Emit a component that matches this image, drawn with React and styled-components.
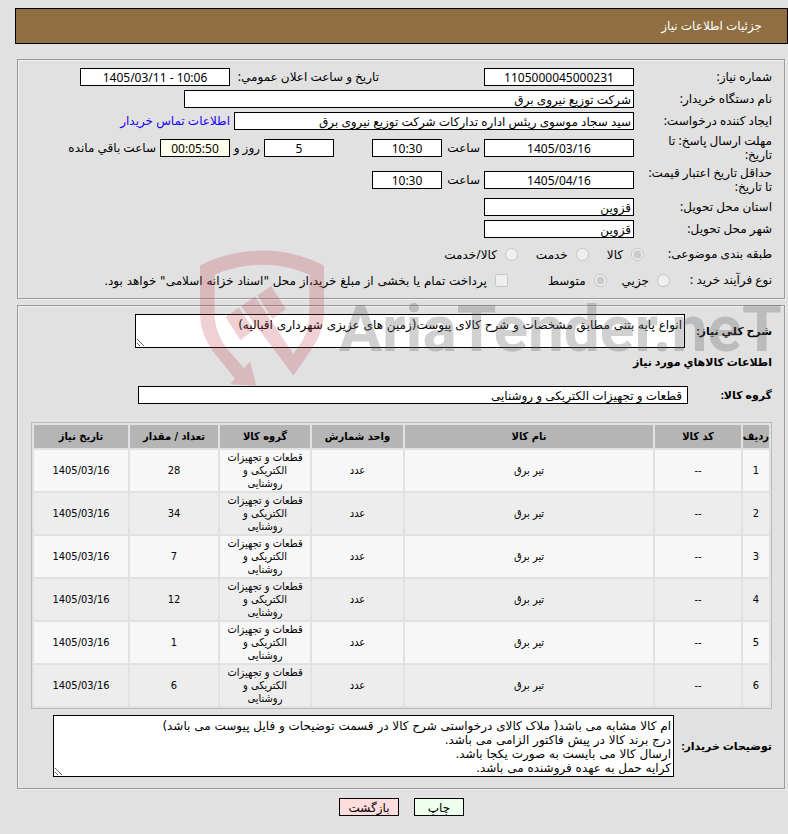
import styled, { createGlobalStyle } from 'styled-components';

const rows = [
    { id: 1, qty: 28 },
    { id: 2, qty: 34 },
    { id: 3, qty: 7 },
    { id: 4, qty: 12 },
    { id: 5, qty: 1 },
    { id: 6, qty: 6 },
];

const buyerNotes = `ام کالا مشابه می باشد( ملاک کالای درخواستی شرح کالا در قسمت توضیحات و فایل پیوست می باشد)
درج برند کالا در پیش فاکتور الزامی می باشد.
ارسال کالا می بایست به صورت یکجا باشد.
کرایه حمل به عهده فروشنده می باشد.`;

function Option ({ type, name, checked, gap, wide, children }) {

    return (
        <OptionLabel $gap={gap} $wide={wide}>
            <input type={type} name={name} defaultChecked={checked} disabled />
            <span>{children}</span>
        </OptionLabel>
    );

}

function NeedInfo () {

    return (

        <Panel>
            <Row>
                <Label htmlFor="number">شماره نیاز:</Label>
                <Field id="number" dir="ltr" $width={150} $center readOnly value="1105000045000231" />
                <SideLabel htmlFor="announce">تاریخ و ساعت اعلان عمومي:</SideLabel>
                <Field id="announce" dir="ltr" $width={150} $center readOnly value="1405/03/11 - 10:06" />
            </Row>
            <Row>
                <Label htmlFor="buyer">نام دستگاه خریدار:</Label>
                <Field id="buyer" $width={450} readOnly value="شرکت توزیع نیروی برق" />
            </Row>
            <Row>
                <Label htmlFor="creator">ایجاد کننده درخواست:</Label>
                <Field id="creator" $width={400} readOnly value="سید سجاد موسوی ریئس اداره تدارکات شرکت توزیع نیروی برق" />
                <ContactLink href="#contact">اطلاعات تماس خریدار</ContactLink>
            </Row>
            <Row $height={32}>
                <Label htmlFor="deadline">مهلت ارسال پاسخ: تا<br />تاریخ:</Label>
                <Field id="deadline" dir="ltr" $width={150} $center readOnly value="1405/03/16" />
                <Unit htmlFor="deadlineTime" $width={42}>ساعت</Unit>
                <Field id="deadlineTime" dir="ltr" $width={70} $center readOnly value="10:30" />
                <Remaining>
                    <Field id="days" dir="ltr" $width={70} $center readOnly value="5" />
                    <Unit htmlFor="days" $width={34}>روز و</Unit>
                    <Field id="left" dir="ltr" $width={70} $center $color="#ffffee" readOnly value="00:05:50" />
                    <Unit htmlFor="left">ساعت باقي مانده</Unit>
                </Remaining>
            </Row>
            <Row $height={32}>
                <Label htmlFor="valid">حداقل تاریخ اعتبار قیمت:<br />تا تاریخ:</Label>
                <Field id="valid" dir="ltr" $width={150} $center readOnly value="1405/04/16" />
                <Unit htmlFor="validTime" $width={42}>ساعت</Unit>
                <Field id="validTime" dir="ltr" $width={70} $center readOnly value="10:30" />
            </Row>
            <Row>
                <Label htmlFor="province">استان محل تحویل:</Label>
                <Field id="province" $width={150} readOnly value="قزوین" />
            </Row>
            <Row>
                <Label htmlFor="city">شهر محل تحویل:</Label>
                <Field id="city" $width={150} readOnly value="قزوین" />
            </Row>
            <Row $height={28}>
                <Label as="span" $width={128}>طبقه بندی موضوعی:</Label>
                <Option type="radio" name="kind" checked gap={18}>کالا</Option>
                <Option type="radio" name="kind" gap={18}>خدمت</Option>
                <Option type="radio" name="kind">کالا/خدمت</Option>
            </Row>
            <Row $height={24}>
                <Label as="span" $width={102}>نوع فرآیند خرید :</Label>
                <Option type="radio" name="process" gap={15}>جزیي</Option>
                <Option type="radio" name="process" checked gap={40}>متوسط</Option>
                <Option type="checkbox" name="treasury" wide>پرداخت تمام یا بخشی از مبلغ خرید،از محل "اسناد خزانه اسلامی" خواهد بود.</Option>
            </Row>
        </Panel>

    );

}

function GoodsInfo () {

    return (

        <GoodsPanel>
            <Row>
                <BoldLabel htmlFor="summary" $width={87}>شرح کلي نیاز:</BoldLabel>
                <SummaryBox id="summary" readOnly value="انواع پایه بتنی مطابق مشخصات و شرح کالای پیوست(زمین های عزیزی شهرداری اقبالیه)" />
            </Row>
            <Heading>اطلاعات کالاهاي مورد نیاز</Heading>
            <GroupRow>
                <BoldLabel htmlFor="group" $width={84}>گروه کالا:</BoldLabel>
                <Field id="group" $width={550} $indent={5} readOnly value="قطعات و تجهیزات الکتریکی و روشنایی" />
            </GroupRow>
            <GoodsTable>
                <colgroup>
                    <Col $width={28} />
                    <Col $width={88} />
                    <Col />
                    <Col $width={93} />
                    <Col $width={92} />
                    <Col $width={90} />
                    <Col $width={96} />
                </colgroup>
                <thead>
                    <tr>
                        <th>ردیف</th>
                        <th>کد کالا</th>
                        <th>نام کالا</th>
                        <th>واحد شمارش</th>
                        <th>گروه کالا</th>
                        <th>تعداد / مقدار</th>
                        <th>تاریخ نیاز</th>
                    </tr>
                </thead>
                <tbody>
                    {rows.map(({ id, qty }) => (
                        <tr key={id}>
                            <td>{id}</td>
                            <td>--</td>
                            <td>تیر برق</td>
                            <td>عدد</td>
                            <td>قطعات و تجهیزات الکتریکی و روشنایی</td>
                            <td>{qty}</td>
                            <td>1405/03/16</td>
                        </tr>
                    ))}
                </tbody>
            </GoodsTable>
            <Row>
                <BoldLabel htmlFor="notes" $width={98}>توضیحات خریدار:</BoldLabel>
                <NotesBox id="notes" readOnly value={buyerNotes} />
            </Row>
        </GoodsPanel>

    );

}

function Watermark () {

    return (

        <WatermarkLayer>
            <Shield viewBox="60 45 374 410">
                <path d="M60 90Q150 45 247 45T434 90V230Q434 290 395 345L342 422L184 212L226 184L342 357L370 315Q390 282 390 230V118Q325 88 247 88T104 118V235Q104 290 140 340L193 400L211 380L230 453L152 448L165 430L100 350Q60 295 60 235Z" />
                <path d="M137 246L177 217L223 285L182 315Z" />
                <path d="M233 181L274 152L320 221L278 251Z" />
            </Shield>
            <Brand>AriaTender.neT</Brand>
        </WatermarkLayer>

    );

}

export default function App () {

    return (

        <Page dir="rtl">
            <GlobalStyle />
            <TitleBar>جزئیات اطلاعات نیاز</TitleBar>
            <NeedInfo />
            <GoodsInfo />
            <Actions>
                <ActionButton type="button" $width={50} $color="#eeffee">چاپ</ActionButton>
                <ActionButton type="button" $width={60} $color="#ffdddd">بازگشت</ActionButton>
            </Actions>
            <Watermark />
        </Page>

    );

}

const GlobalStyle = createGlobalStyle`

    * {
        box-sizing: border-box;
    }

    body {
        margin: 0;
        background: #e1e1e1;
    }

    body, input, textarea, button {
        font-family: 'Noto Sans', 'DejaVu Sans', sans-serif;
        font-size: 12px;
        line-height: 14px;
        color: #000000;
    }

`;

const Page = styled.div`

    position: relative;
    overflow: hidden;
    padding-top: 8px;
    padding-bottom: 18px;

`;

const TitleBar = styled.header`

    height: 36px;
    margin-left: 15px;
    padding-right: 25px;
    display: flex;
    align-items: center;
    background: #8f6e41;
    border: 1px solid #000000;
    color: #ffffff;

`;

const Panel = styled.section`

    margin: 15px 3px 0 17px;
    padding: 6px 12px 6px 13px;
    border: 1px solid #999999;
    box-shadow: 1px 1px 0 #f0f0f0, inset 1px 1px 0 #f0f0f0;

`;

const GoodsPanel = styled(Panel)`

    margin-top: 6px;
    padding-top: 8px;
    padding-bottom: 11px;

`;

const Row = styled.div`

    min-height: ${({ $height = 22 }) => $height}px;
    display: flex;
    align-items: center;

`;

const GroupRow = styled.div`

    display: flex;
    align-items: center;

`;

const Label = styled.label`

    width: ${({ $width = 138 }) => $width}px;
    flex-shrink: 0;
    white-space: nowrap;

`;

const BoldLabel = styled(Label)`

    font-size: 11px;
    font-weight: 700;

`;

const SideLabel = styled.label`

    width: 254px;
    padding-right: 105px;
    white-space: nowrap;

`;

const Unit = styled.label`

    width: ${({ $width }) => $width ? `${$width}px` : 'auto'};
    padding-right: 4px;
    white-space: nowrap;

`;

const Remaining = styled.div`

    margin-right: 38px;
    display: flex;
    align-items: center;

`;

const Field = styled.input`

    width: ${({ $width }) => $width}px;
    height: 18px;
    padding: 1px ${({ $indent = 2 }) => $indent}px 0;
    border: 1px solid #000000;
    background: ${({ $color = '#ffffff' }) => $color};
    text-align: ${({ $center }) => $center ? 'center' : 'right'};

`;

const ContactLink = styled.a`

    margin-right: 4px;
    color: #1a00ff;
    text-decoration: none;

`;

const OptionLabel = styled.label`

    margin-left: ${({ $gap = 0 }) => $gap}px;
    display: flex;
    align-items: center;
    gap: 8px;
    white-space: nowrap;
    font-family: ${({ $wide }) => $wide ? "'DejaVu Sans', sans-serif" : 'inherit'};

    input {
        width: 13px;
        height: 13px;
        margin: 0;
    }

    span {
        padding-top: 2px;
    }

`;

const TextBox = styled.textarea`

    padding: 3px 2px 0;
    border: 1px solid #000000;
    background: #ffffff;
    font-family: 'DejaVu Sans', sans-serif;
    overflow: hidden;
    resize: both;

`;

const SummaryBox = styled(TextBox)`

    width: 550px;
    height: 34px;

`;

const NotesBox = styled(TextBox)`

    flex: 1;
    height: 62px;
    margin-left: 22px;

`;

const Heading = styled.h2`

    margin: 0 0 10px;
    font-size: 11px;
    line-height: 28px;
    font-weight: 700;

`;

const GoodsTable = styled.table`

    width: 100%;
    margin: 18px 0 6px;
    table-layout: fixed;
    border: 1px solid #bbbbbb;
    border-spacing: 2px;
    font-family: 'DejaVu Sans Condensed', 'DejaVu Sans', sans-serif;
    font-size: 11px;
    line-height: 13px;
    text-align: center;

    th {
        height: 23px;
        padding: 0;
        background: #b5b5b5;
        white-space: nowrap;
    }

    td {
        padding: 1px 5px;
        background: #f7f7f7;
    }

    tbody tr:nth-child(even) td {
        background: #ededed;
    }

`;

const Col = styled.col`

    width: ${({ $width }) => $width ? `${$width - 2}px` : 'auto'};

`;

const Actions = styled.div`

    margin: 9px 0 0 15px;
    display: flex;
    justify-content: center;
    gap: 15px;

`;

const ActionButton = styled.button`

    width: ${({ $width }) => $width}px;
    height: 18px;
    padding: 1px 0 0;
    border: 1px solid #000000;
    background: ${({ $color }) => $color};

`;

const WatermarkLayer = styled.div`

    position: absolute;
    top: 250px;
    left: 200px;
    right: 0;
    display: flex;
    direction: ltr;
    gap: 15px;
    pointer-events: none;

`;

const Shield = styled.svg`

    width: 124px;
    height: 137px;
    flex-shrink: 0;
    fill: rgba(190, 60, 70, 0.24);

`;

const Brand = styled.span`

    padding-top: 48px;
    font-family: Roboto, sans-serif;
    font-size: 64px;
    line-height: 64px;
    font-weight: 700;
    color: rgba(100, 100, 100, 0.3);

`;
